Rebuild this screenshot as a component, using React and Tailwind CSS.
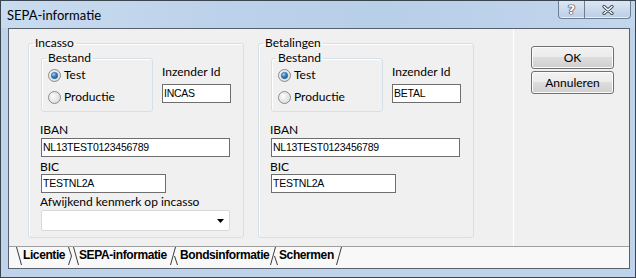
import React from "react";

function Radio({ checked }) {
  return (
    <svg width="13" height="13" viewBox="0 0 13 13" className="shrink-0">
      <defs>
        <radialGradient id="rgo" cx="0.35" cy="0.35" r="0.8">
          <stop offset="0" stopColor="#ffffff" />
          <stop offset="1" stopColor="#d4d4d4" />
        </radialGradient>
        <radialGradient id="rgb" cx="0.35" cy="0.3" r="0.8">
          <stop offset="0" stopColor="#a9d2f7" />
          <stop offset="0.5" stopColor="#3d7fc4" />
          <stop offset="1" stopColor="#1b4f8c" />
        </radialGradient>
      </defs>
      <circle cx="6.5" cy="6.5" r="6" fill="url(#rgo)" stroke="#8a8a8a" strokeWidth="1" />
      <circle cx="6.5" cy="6.5" r="4.2" fill="none" stroke="#e9e9e9" strokeWidth="1" />
      {checked && <circle cx="6.5" cy="6.5" r="3.2" fill="url(#rgb)" stroke="#2a5a94" strokeWidth="0.6" />}
    </svg>
  );
}

function Input({ w, value }) {
  return (
    <div
      className={`${w} h-[19px] bg-white border border-[#6e6e6e] pl-[1px] leading-[17px] text-[10.5px] tracking-[-0.25px] text-black font-['Liberation_Sans',Arial,sans-serif] whitespace-nowrap overflow-hidden`}
    >
      {value}
    </div>
  );
}

function Group({ title, code, combo }) {
  return (
    <fieldset className="w-[216px] h-[202px] border border-[#d5dfe5] rounded-[3px] p-0 m-0 min-w-0 shadow-[inset_1px_1px_0_#ffffff]">
      <legend className="ml-[4px] px-[2px] leading-[14px]">{title}</legend>
      <div className="flex flex-col pl-[12px]">
        <div className="flex mt-[1px]">
          <fieldset className="w-[112px] h-[61px] border border-[#d5dfe5] rounded-[3px] p-0 m-0 min-w-0 shadow-[inset_1px_1px_0_#ffffff]">
            <legend className="ml-[4px] px-[2px] leading-[14px]">Bestand</legend>
            <div className="flex flex-col pl-[6px] mt-[2px] gap-[6px]">
              <div className="flex items-center h-[16px]">
                <Radio checked />
                <span className="ml-[3px] leading-[16px]">Test</span>
              </div>
              <div className="flex items-center h-[16px]">
                <Radio />
                <span className="ml-[3px] leading-[16px]">Productie</span>
              </div>
            </div>
          </fieldset>
          <div className="ml-[9px] flex flex-col mt-[14px]">
            <span className="leading-[14px]">Inzender Id</span>
            <div className="mt-[5px]">
              <Input w="w-[69px]" value={code} />
            </div>
          </div>
        </div>
        <span className="mt-[11px] leading-[14px] -ml-[1px]">IBAN</span>
        <div className="mt-[1px]">
          <Input w="w-[189px]" value="NL13TEST0123456789" />
        </div>
        <span className="mt-[3px] leading-[14px] -ml-[1px]">BIC</span>
        <div>
          <Input w="w-[125px]" value="TESTNL2A" />
        </div>
        {combo && (
          <>
            <span className="mt-[2px] leading-[14px] -ml-[1px]">Afwijkend kenmerk op incasso</span>
            <div className="mt-[1px] w-[189px] h-[21px] bg-white border border-[#d9d9d9] rounded-[2px] flex items-center justify-end pr-[5px]">
              <svg width="7" height="4" viewBox="0 0 7 4">
                <path d="M0 0 H7 L3.5 4 Z" fill="#000" />
              </svg>
            </div>
          </>
        )}
      </div>
    </fieldset>
  );
}

function Button({ children, className = "" }) {
  return (
    <div
      className={`w-[83px] h-[23px] rounded-[3px] border border-[#707070] bg-[linear-gradient(#f2f2f2_0%,#ebebeb_50%,#dddddd_50%,#cfcfcf_100%)] shadow-[inset_0_0_0_1px_#fbfbfb] flex items-center justify-center text-[12px] leading-[14px] text-black ${className}`}
    >
      {children}
    </div>
  );
}

export default function App() {
  return (
    <div className="w-[636px] h-[278px] border border-[#3b4550] bg-[#bfd4ea] flex flex-col font-['Lato','Open_Sans',sans-serif] text-[12px] text-black overflow-hidden">
      {/* Title bar */}
      <div className="h-[27px] flex items-start justify-between bg-[linear-gradient(90deg,#c9dbef_0%,#bcd2ea_35%,#b8cfe8_60%,#c2d6ec_100%)]">
        <span className="ml-[6px] mt-[6px] leading-[16px] text-[13px] text-black">SEPA-informatie</span>
        <div className="mr-[4px] flex h-[18px] border border-t-0 border-[#6d7d92] rounded-b-[4px] overflow-hidden bg-[linear-gradient(#dce7f4_0%,#cbdaec_50%,#bccee4_100%)] shadow-[inset_0_-1px_0_#e6eef8]">
          <div className="w-[25px] flex items-center justify-center">
            <span className="text-[13px] leading-[13px] font-bold text-white font-['DejaVu_Sans',sans-serif] [text-shadow:0_0_1px_#2e3a4a,0_0_1px_#2e3a4a,0_0_1px_#2e3a4a,0_0_1px_#2e3a4a]">?</span>
          </div>
          <div className="w-[46px] border-l border-[#6d7d92] flex items-center justify-center">
            <svg width="12" height="10" viewBox="0 0 12 10">
              <path d="M2 1.5 L10 8.5 M10 1.5 L2 8.5" stroke="#3a4656" strokeWidth="3.2" strokeLinecap="round" />
              <path d="M2 1.5 L10 8.5 M10 1.5 L2 8.5" stroke="#ffffff" strokeWidth="1.4" strokeLinecap="round" />
            </svg>
          </div>
        </div>
      </div>

      {/* Client */}
      <div className="ml-[7px] mr-[5px] h-[241px] border border-[#56616d] bg-[#f0f0f0] flex flex-col">
        <div className="h-[218px] flex border-b border-[#a0a0a0]">
          <div className="w-[504px] flex items-start pl-[19px] pt-[7px] gap-[14px]">
            <Group title="Incasso" code="INCAS" combo />
            <Group title="Betalingen" code="BETAL" />
          </div>
          <div className="w-[116px] border-l border-white flex flex-col pl-[17px] pt-[17px] gap-[2px]">
            <Button>OK</Button>
            <Button>Annuleren</Button>
          </div>
        </div>
        <div className="h-[21px] relative bg-[#f8f8f8] flex items-start pt-[1px] font-['Liberation_Sans',Arial,sans-serif] font-bold text-[12px] leading-[15px] tracking-[-0.4px]">
          <svg className="absolute left-0 top-0" width="620" height="21" viewBox="0 0 620 21">
            <g stroke="#3c3c3c" strokeWidth="1" fill="none">
              <path d="M7.5 0 L12.5 18" />
              <path d="M59.5 0 L62.5 9 L59.5 18" />
              <path d="M64.5 0 L69.5 18" />
              <path d="M161.5 18 L166.5 0" />
              <path d="M165.5 9 L168.5 18" />
              <path d="M261.5 18 L266.5 0" />
              <path d="M265.5 9 L268.5 18" />
              <path d="M327.5 18 L332.5 0" />
            </g>
          </svg>
          <span className="relative ml-[14px] w-[56px]">Licentie</span>
          <span className="relative w-[101px]">SEPA-informatie</span>
          <span className="relative w-[99px]">Bondsinformatie</span>
          <span className="relative">Schermen</span>
        </div>
      </div>
    </div>
  );
}
